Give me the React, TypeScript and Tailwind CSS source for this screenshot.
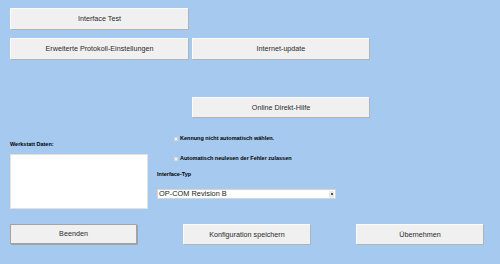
import React from 'react';

const btn =
  'flex items-center justify-center bg-[#f0f0f0] border-t border-l border-[#fbfbfb] shadow-[1px_1px_0_#b3b3b3] text-[7.2px] text-[#2a2a2a] leading-none';

function Check({ label }: { label: string }) {
  return (
    <div className="flex items-center h-[10px] pl-[17px]">
      <span className="w-[4px] h-[4px] bg-[#f4f4f4] border border-[#d6d6d6] mr-[2px]" />
      <span className="text-[5.5px] font-bold text-black leading-none">{label}</span>
    </div>
  );
}

export default function App() {
  return (
    <div
      className="w-[500px] h-[264px] bg-[#a6c9ef] overflow-hidden flex flex-col"
      style={{ fontFamily: '"Liberation Sans", Arial, sans-serif' }}
    >
      {/* obere Knöpfe */}
      <div className="pt-[8px] pl-[10px]">
        <button className={`${btn} w-[178px] h-[21px]`}>Interface Test</button>
      </div>
      <div className="mt-[9px] pl-[10px] flex gap-[4px]">
        <button className={`${btn} w-[178px] h-[21px]`}>Erweiterte Protokoll-Einstellungen</button>
        <button className={`${btn} w-[177px] h-[21px]`}>Internet-update</button>
      </div>
      <div className="mt-[38px] pl-[192px]">
        <button className={`${btn} w-[177px] h-[20px]`}>Online Direkt-Hilfe</button>
      </div>

      {/* Mitte */}
      <div className="mt-[17px] flex items-start">
        <div className="ml-[10px] w-[138px] flex flex-col">
          <div className="mt-[6px] h-[10px] flex items-center text-[5.5px] font-bold text-black leading-none">
            Werkstatt Daten:
          </div>
          <div className="mt-[4px] h-[55px] bg-white border border-[#e2e2e2]" />
        </div>
        <div className="ml-[9px] flex flex-col">
          <Check label="Kennung nicht automatisch wählen." />
          <div className="mt-[10px]">
            <Check label="Automatisch neulesen der Fehler zulassen" />
          </div>
          <div className="mt-[6px] h-[10px] flex items-center text-[5.5px] font-bold text-black leading-none">
            Interface-Typ
          </div>
          <div className="mt-[9px] w-[179px] h-[10px] bg-white border border-[#d4d4d4] flex items-center justify-between">
            <span className="pl-[1px] text-[7.4px] text-[#1a1a1a] leading-none">OP-COM Revision B</span>
            <span className="mr-[1px] w-[5px] h-[7px] bg-[#eaeaea] flex items-center justify-center">
              <span className="w-[2px] h-[2px] bg-[#505050]" />
            </span>
          </div>
        </div>
      </div>

      {/* untere Knöpfe */}
      <div className="mt-[15px] pl-[10px] flex gap-[46px]">
        <button className="flex items-center justify-center w-[127px] h-[20px] bg-[#f0f0f0] border border-[#a3a3a3] shadow-[1px_1px_0_#a3a3a3] text-[7.2px] text-[#2a2a2a] leading-none">
          Beenden
        </button>
        <button className={`${btn} w-[127px] h-[20px]`}>Konfiguration speichern</button>
        <button className={`${btn} w-[127px] h-[20px]`}>Übernehmen</button>
      </div>
    </div>
  );
}
